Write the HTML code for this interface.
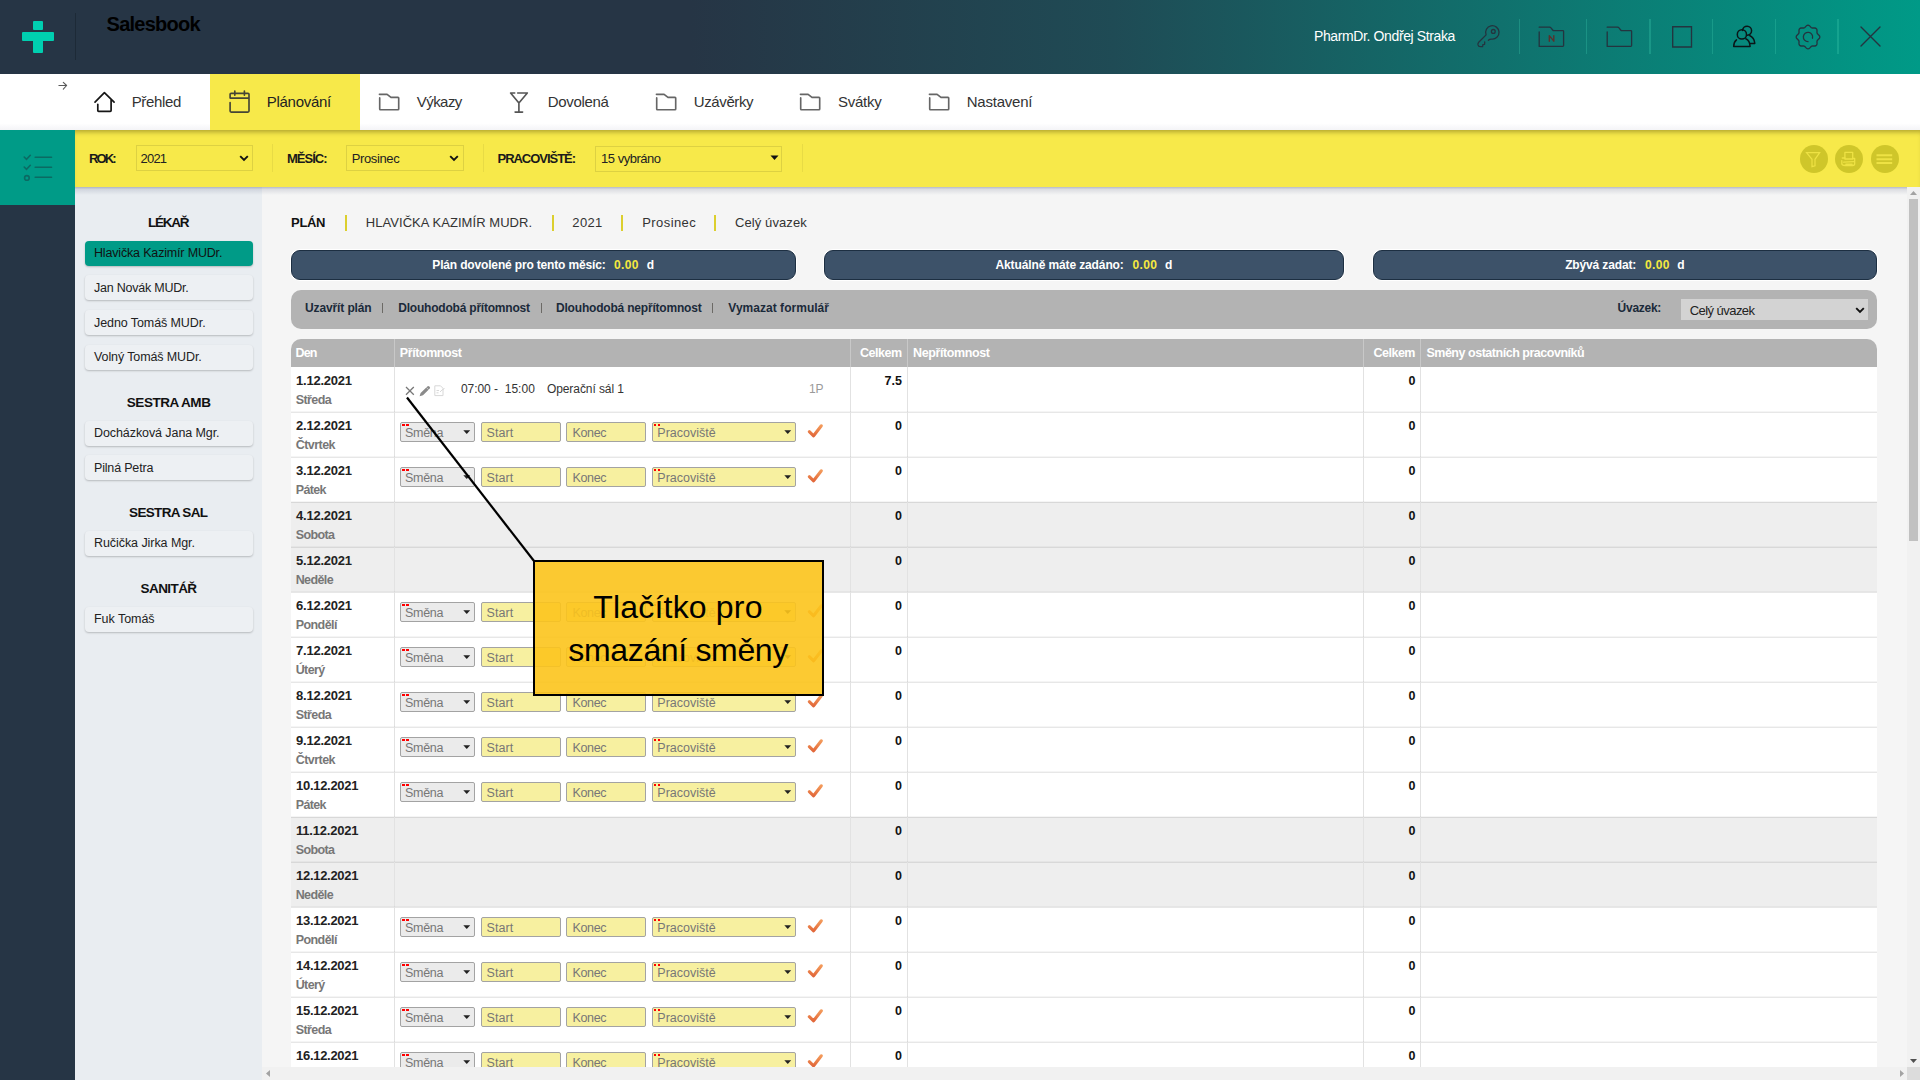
<!DOCTYPE html><html><head><meta charset="utf-8"><style>*{box-sizing:border-box;margin:0;padding:0}
html,body{width:1920px;height:1080px;overflow:hidden}
body{position:relative;background:#f4f4f4;font-family:"Liberation Sans",sans-serif;color:#222}
.a{position:absolute}
.t{white-space:pre}
svg{position:absolute;overflow:visible}
#hdr{left:0;top:0;width:1920px;height:74px;background:linear-gradient(90deg,#263545 0%,#263545 36%,#1f4b55 58%,#009a87 100%)}
#nav{left:0;top:74px;width:1920px;height:56px;background:linear-gradient(#fff 88%,#f4f4f7)}
#tab{left:210px;top:74px;width:150px;height:56px;background:#f7e94a}
#tb{left:75px;top:130px;width:1845px;height:57px;background:#f7e94a;box-shadow:inset 0 5px 5px -3px rgba(60,50,0,.38)}
#tbsh{left:75px;top:187px;width:1845px;height:8px;background:linear-gradient(rgba(40,50,90,.30),rgba(40,50,90,.12) 30%,rgba(0,0,0,0))}
#teal{left:0;top:130px;width:75px;height:75px;background:#009b87}
#dark{left:0;top:205px;width:75px;height:875px;background:#263545}
#panel{left:75px;top:187px;width:187px;height:893px;background:#e9edf1}
#main{left:262px;top:187px;width:1645px;height:880px;background:#f5f5f5}
#vsb{left:1907px;top:187px;width:13px;height:880px;background:#f1f1f1}
#vthumb{left:1909px;top:199px;width:9px;height:342px;background:#c1c1c1}
#hsb{left:262px;top:1067px;width:1645px;height:13px;background:#f1f1f1}
#corner{left:1907px;top:1067px;width:13px;height:13px;background:#dcdcdc}
.sel{border:1px solid rgba(0,0,0,.10);background:transparent}
.card{left:84.8px;width:168.6px;height:25px;border-radius:4px;background:#edf0f3;box-shadow:0 1px 2px rgba(0,0,0,.22)}
.card.act{background:#009b87}
.bbox{top:250px;height:30px;border-radius:9px;background:#3d5269;border:1px solid #1d2f42;box-shadow:0 0 0 1px #fff}
#gbar{left:291px;top:290px;width:1586px;height:39px;border-radius:10px;background:#b3b3b3}
#uvsel{left:1681px;top:299px;width:187px;height:21px;background:#d3d3d3}
#thead{left:291px;top:339px;width:1586px;height:28px;border-radius:10px 10px 0 0;background:#b3b3b3}
.row{left:291px;width:1586px;height:45px;background:#fff}
.hl{left:291px;width:1586px;height:2px;background:linear-gradient(rgba(0,0,0,.04) 50%,rgba(0,0,0,.095) 50%)}
.row.we{background:#eeeeee}
.vl{width:1px;background:#e2e2e2}
.vlh{width:1px;background:#c9c9c9}
.ctl{top:0;height:20px;border:1px solid #a3a3a3;border-radius:2px;box-shadow:inset 0 0 0 0 #fff}
.smena{background:#ebebeb}
.yel{background:#f7f0a0}
.rd{width:2.5px;height:2px;background:#f00}
#callout{left:533px;top:560px;width:291px;height:136px;border:2px solid #000;background:rgba(252,196,28,.90)}
</style></head><body><div id="hdr" class="a"></div>
<div id="nav" class="a"></div>
<div id="tab" class="a"></div>
<div id="tb" class="a"></div>
<div id="teal" class="a"></div>
<div id="dark" class="a"></div>
<div id="panel" class="a"></div>
<div id="main" class="a"></div>
<div class="a" style="left:33px;top:20.5px;width:9.5px;height:9.5px;background:#00cfb0;border-radius:1px"></div>
<div class="a" style="left:22px;top:32px;width:31.7px;height:9px;background:#00cfb0;border-radius:1px"></div>
<div class="a" style="left:33px;top:41px;width:9.5px;height:11.6px;background:#00cfb0;border-radius:0 0 1px 1px"></div>
<div class="a" style="left:75px;top:13px;width:1px;height:47px;background:#1d2a37"></div>
<div class="a t " style="left:106.60px;top:14.00px;font-size:20px;line-height:20px;font-weight:bold;color:#000;letter-spacing:-0.756px;">Salesbook</div>
<div class="a t " style="left:1314.00px;top:29.00px;font-size:14px;line-height:14px;font-weight:normal;color:#fff;letter-spacing:-0.381px;">PharmDr. Ondřej Straka</div>
<div class="a" style="left:1518.8px;top:18.7px;width:1.2px;height:35.7px;background:rgba(60,200,170,.32)"></div>
<div class="a" style="left:1586.3px;top:18.7px;width:1.2px;height:35.7px;background:rgba(60,200,170,.32)"></div>
<div class="a" style="left:1649.4px;top:18.7px;width:1.2px;height:35.7px;background:rgba(60,200,170,.32)"></div>
<div class="a" style="left:1712.2px;top:18.7px;width:1.2px;height:35.7px;background:rgba(60,200,170,.32)"></div>
<div class="a" style="left:1774.7px;top:18.7px;width:1.2px;height:35.7px;background:rgba(60,200,170,.32)"></div>
<div class="a" style="left:1837.4px;top:18.7px;width:1.2px;height:35.7px;background:rgba(60,200,170,.32)"></div>
<svg style="left:1470px;top:18px" width="40" height="37" viewBox="0 0 40 37"><g fill="none" stroke="#24343f" stroke-width="1.3" stroke-linecap="round" stroke-linejoin="round"><path d="M18.4 22.2Q19.6 21 21.6 21.1A6.7 6.7 0 1 0 16.1 16.9L8.7 24.2Q7.7 25.3 8 26.9Q8.4 28.6 10.2 28.6H12.6L12.9 26.7 14.6 26.3 14.7 23.9"/><circle cx="23.3" cy="13.4" r="1.9"/></g></svg>
<svg style="left:1530px;top:18px" width="40" height="37" viewBox="0 0 40 37"><g fill="none" stroke="#24343f" stroke-width="1.3" stroke-linecap="round" stroke-linejoin="round"><path d="M9.2 9.2H19.5Q20.4 9.2 21.2 10.2L22.6 12Q23.2 12.7 24.2 12.7H32.8Q33.6 12.7 33.6 13.5V27.6Q33.6 28.4 32.8 28.4H9.2V14"/><path d="M19.3 23.2V17.6L23.8 23.2V17.6" stroke="#5b302c" stroke-width="1.35"/></g></svg>
<svg style="left:1598px;top:18px" width="40" height="37" viewBox="0 0 40 37"><g fill="none" stroke="#24343f" stroke-width="1.3" stroke-linecap="round" stroke-linejoin="round"><path d="M9.2 9.2H19.5Q20.4 9.2 21.2 10.2L22.6 12Q23.2 12.7 24.2 12.7H32.8Q33.6 12.7 33.6 13.5V27.6Q33.6 28.4 32.8 28.4H9.2V14"/></g></svg>
<svg style="left:1670px;top:24px" width="25" height="26" viewBox="0 0 25 26"><path d="M2.7 2.7H21.5V23H2.7Z" fill="none" stroke="#24343f" stroke-width="1.35"/></svg>
<svg style="left:1725px;top:18px" width="35" height="35" viewBox="0 0 35 35"><g fill="none" stroke="#0b1618" stroke-width="1.5" stroke-linecap="round" stroke-linejoin="round"><path d="M17.6 12.4A4.5 4.5 0 1 1 22.4 17.2"/><path d="M24.6 17.5Q29.3 19.6 29.8 25.4H25.5"/><circle cx="16.9" cy="16.4" r="4.6"/><path d="M11.5 21.9Q8.7 24.1 8.7 28.4H25.1Q24.8 22.6 20.8 20.8"/></g></svg>
<svg style="left:1796px;top:25px" width="24" height="24" viewBox="0 0 24 24"><g fill="none" stroke="#24343f" stroke-width="1.35"><path d="M12.00 0.20 L12.76 0.35 L13.48 0.77 L14.12 1.36 L14.69 1.98 L15.22 2.50 L15.79 2.85 L16.43 3.01 L17.19 3.01 L18.03 2.98 L18.89 3.02 L19.70 3.22 L20.34 3.66 L20.78 4.30 L20.98 5.11 L21.02 5.97 L20.99 6.81 L20.99 7.57 L21.15 8.21 L21.50 8.78 L22.02 9.31 L22.64 9.88 L23.23 10.52 L23.65 11.24 L23.80 12.00 L23.65 12.76 L23.23 13.48 L22.64 14.12 L22.02 14.69 L21.50 15.22 L21.15 15.79 L20.99 16.43 L20.99 17.19 L21.02 18.03 L20.98 18.89 L20.78 19.70 L20.34 20.34 L19.70 20.78 L18.89 20.98 L18.03 21.02 L17.19 20.99 L16.43 20.99 L15.79 21.15 L15.22 21.50 L14.69 22.02 L14.12 22.64 L13.48 23.23 L12.76 23.65 L12.00 23.80 L11.24 23.65 L10.52 23.23 L9.88 22.64 L9.31 22.02 L8.78 21.50 L8.21 21.15 L7.57 20.99 L6.81 20.99 L5.97 21.02 L5.11 20.98 L4.30 20.78 L3.66 20.34 L3.22 19.70 L3.02 18.89 L2.98 18.03 L3.01 17.19 L3.01 16.43 L2.85 15.79 L2.50 15.22 L1.98 14.69 L1.36 14.12 L0.77 13.48 L0.35 12.76 L0.20 12.00 L0.35 11.24 L0.77 10.52 L1.36 9.88 L1.98 9.31 L2.50 8.78 L2.85 8.21 L3.01 7.57 L3.01 6.81 L2.98 5.97 L3.02 5.11 L3.22 4.30 L3.66 3.66 L4.30 3.22 L5.11 3.02 L5.97 2.98 L6.81 3.01 L7.57 3.01 L8.21 2.85 L8.78 2.50 L9.31 1.98 L9.88 1.36 L10.52 0.77 L11.24 0.35Z"/><path d="M12 16.65A4.65 4.65 0 1 1 16.5 13.2" stroke-linecap="round"/></g></svg>
<svg style="left:1859.5px;top:26px" width="21" height="21" viewBox="0 0 21 21"><g stroke="#24343f" stroke-width="1.35" stroke-linecap="round"><path d="M1 1L20 20M20 1L1 20"/></g></svg>
<svg style="left:57px;top:81px" width="13" height="10" viewBox="0 0 13 10"><g fill="none" stroke="#5a5a5a" stroke-width="1.1" stroke-linecap="round" stroke-linejoin="round"><path d="M1.9 4.5H9.6M6.3 1.3L9.6 4.5 6.3 8.2"/></g></svg>
<svg style="left:88px;top:86px" width="32" height="32" viewBox="0 0 32 32"><g fill="none" stroke="#161616" stroke-width="1.7" stroke-linecap="round" stroke-linejoin="round"><path d="M7 16.1L16.4 6.7 26.1 16.1M9.8 18.3V24.5Q9.8 25.3 10.6 25.3H22.3Q23.1 25.3 23.1 24.5V13.9"/></g></svg>
<div class="a t " style="left:131.70px;top:94.00px;font-size:15px;line-height:15px;font-weight:normal;color:#333;letter-spacing:-0.351px;">Přehled</div>
<svg style="left:224px;top:86px" width="32" height="32" viewBox="0 0 32 32"><g fill="none" stroke="#454535" stroke-width="1.65" stroke-linecap="round" stroke-linejoin="round"><path d="M6.1 12.1V8.3Q6.1 7.3 7.1 7.3H24Q25 7.3 25 8.3V25.1Q25 26.1 24 26.1H7.1Q6.1 26.1 6.1 25.1V16.6M6.1 12.1H25M10.8 5V9.2M20.4 5V9.2"/></g></svg>
<div class="a t " style="left:266.70px;top:94.00px;font-size:15px;line-height:15px;font-weight:normal;color:#222;letter-spacing:-0.265px;">Plánování</div>
<svg style="left:372.0px;top:86px" width="32" height="32" viewBox="0 0 32 32"><g fill="none" stroke="#666" stroke-width="1.65" stroke-linecap="round" stroke-linejoin="round"><path d="M7.4 8.3H15.1L19 11.4H26Q26.7 11.4 26.7 12.1V23Q26.7 23.7 26 23.7H8.4Q7.7 23.7 7.7 23V11.9"/></g></svg>
<div class="a t " style="left:416.70px;top:94.00px;font-size:15px;line-height:15px;font-weight:normal;color:#333;letter-spacing:-0.532px;">Výkazy</div>
<svg style="left:503px;top:86px" width="32" height="32" viewBox="0 0 32 32"><g fill="none" stroke="#555" stroke-width="1.65" stroke-linecap="round" stroke-linejoin="round"><path d="M11.7 7H7.6L15.9 17 24.3 7H14.7M15.9 17V26.1M12.1 26.1H19.6"/></g></svg>
<div class="a t " style="left:547.70px;top:94.00px;font-size:15px;line-height:15px;font-weight:normal;color:#333;letter-spacing:-0.327px;">Dovolená</div>
<svg style="left:649.4px;top:86px" width="32" height="32" viewBox="0 0 32 32"><g fill="none" stroke="#666" stroke-width="1.65" stroke-linecap="round" stroke-linejoin="round"><path d="M7.4 8.3H15.1L19 11.4H26Q26.7 11.4 26.7 12.1V23Q26.7 23.7 26 23.7H8.4Q7.7 23.7 7.7 23V11.9"/></g></svg>
<div class="a t " style="left:693.80px;top:94.00px;font-size:15px;line-height:15px;font-weight:normal;color:#333;letter-spacing:-0.388px;">Uzávěrky</div>
<svg style="left:793.4px;top:86px" width="32" height="32" viewBox="0 0 32 32"><g fill="none" stroke="#666" stroke-width="1.65" stroke-linecap="round" stroke-linejoin="round"><path d="M7.4 8.3H15.1L19 11.4H26Q26.7 11.4 26.7 12.1V23Q26.7 23.7 26 23.7H8.4Q7.7 23.7 7.7 23V11.9"/></g></svg>
<div class="a t " style="left:838.00px;top:94.00px;font-size:15px;line-height:15px;font-weight:normal;color:#333;letter-spacing:-0.263px;">Svátky</div>
<svg style="left:921.6px;top:86px" width="32" height="32" viewBox="0 0 32 32"><g fill="none" stroke="#666" stroke-width="1.65" stroke-linecap="round" stroke-linejoin="round"><path d="M7.4 8.3H15.1L19 11.4H26Q26.7 11.4 26.7 12.1V23Q26.7 23.7 26 23.7H8.4Q7.7 23.7 7.7 23V11.9"/></g></svg>
<div class="a t " style="left:966.70px;top:94.00px;font-size:15px;line-height:15px;font-weight:normal;color:#333;letter-spacing:-0.218px;">Nastavení</div>
<div id="tbsh" class="a"></div>
<div class="a t " style="left:89.00px;top:152.00px;font-size:13px;line-height:13px;font-weight:bold;color:#1a1a1a;letter-spacing:-1.840px;">ROK:</div>
<div class="a sel" style="left:136px;top:145px;width:117px;height:25.5px"></div>
<div class="a t " style="left:140.60px;top:152.00px;font-size:13px;line-height:13px;font-weight:normal;color:#222;letter-spacing:-0.807px;">2021</div>
<svg style="left:239.0px;top:154.5px" width="10" height="7" viewBox="0 0 10 7"><path d="M1.2 1.2L5 5 8.8 1.2" fill="none" stroke="#111" stroke-width="1.9"/></svg>
<div class="a" style="left:272px;top:144px;width:1px;height:27.5px;background:rgba(0,0,0,.06)"></div>
<div class="a t " style="left:287.00px;top:152.00px;font-size:13px;line-height:13px;font-weight:bold;color:#1a1a1a;letter-spacing:-1.000px;">MĚSÍC:</div>
<div class="a sel" style="left:346px;top:145px;width:117.5px;height:25.5px"></div>
<div class="a t " style="left:351.70px;top:152.00px;font-size:13px;line-height:13px;font-weight:normal;color:#222;letter-spacing:-0.368px;">Prosinec</div>
<svg style="left:449.0px;top:154.5px" width="10" height="7" viewBox="0 0 10 7"><path d="M1.2 1.2L5 5 8.8 1.2" fill="none" stroke="#111" stroke-width="1.9"/></svg>
<div class="a" style="left:483px;top:144px;width:1px;height:27.5px;background:rgba(0,0,0,.06)"></div>
<div class="a t " style="left:497.50px;top:152.00px;font-size:13px;line-height:13px;font-weight:bold;color:#1a1a1a;letter-spacing:-1.034px;">PRACOVIŠTĚ:</div>
<div class="a sel" style="left:595px;top:145.5px;width:187px;height:26px"></div>
<div class="a t " style="left:601.00px;top:152.00px;font-size:13px;line-height:13px;font-weight:normal;color:#222;letter-spacing:-0.481px;">15 vybráno</div>
<svg style="left:770px;top:154.5px" width="9" height="6" viewBox="0 0 9 6"><path d="M0.5 0.5H8.5L4.5 5Z" fill="#111"/></svg>
<div class="a" style="left:802px;top:144px;width:1px;height:27.5px;background:rgba(0,0,0,.06)"></div>
<div class="a" style="left:1799.6px;top:145px;width:28px;height:28px;border-radius:50%;background:#cfc62a"></div>
<div class="a" style="left:1834.6px;top:145px;width:28px;height:28px;border-radius:50%;background:#cfc62a"></div>
<div class="a" style="left:1871.0px;top:145px;width:28px;height:28px;border-radius:50%;background:#cfc62a"></div>
<svg style="left:1803px;top:150px" width="22" height="18" viewBox="0 0 22 18"><path d="M7 3.2H20.2L15.5 9.8V16.4L12.5 17.2V9.8Z" fill="none" stroke="#eee244" stroke-width="1.2" transform="translate(-3.5 -0.5)"/></svg>
<svg style="left:1834px;top:145px" width="30" height="28" viewBox="0 0 30 28"><g fill="none" stroke="#eee244" stroke-width="1.3" stroke-linecap="round" stroke-linejoin="round"><path d="M10.9 7.3H18.7V14H10.9Z"/><path d="M10.9 13H8.3M7.8 15.6V18.4Q7.8 20.5 11.1 20.5H18.7Q20.7 20.5 20.7 18.5V13.5H18.7M9.6 17.1L19.7 16.6M11.9 19.2H18.1"/></g></svg>
<svg style="left:1875px;top:150px" width="22" height="18" viewBox="0 0 22 18"><g stroke="#eee244" stroke-width="2"><path d="M1.5 5.2H17.2M1.5 9.2H17.2M1.5 13H17.2"/></g></svg>
<svg style="left:22px;top:153px" width="32" height="30" viewBox="0 0 32 30"><g fill="none" stroke="#0b6b63" stroke-width="1.6" stroke-linecap="round"><path d="M2.2 4L4.5 6.4 8.3 2.3M2.2 14L4.5 16.4 8.3 12.3"/><circle cx="4.9" cy="24.9" r="2.3"/><path d="M13.2 4.3H29.5M13.2 14.3H29.5M13.2 24.3H29.5"/></g></svg>
<div class="a t " style="left:148.10px;top:216.00px;font-size:13.5px;line-height:13.5px;font-weight:bold;color:#111;letter-spacing:-1.300px;">LÉKAŘ</div>
<div class="a t " style="left:126.80px;top:396.00px;font-size:13.5px;line-height:13.5px;font-weight:bold;color:#111;letter-spacing:-0.463px;">SESTRA AMB</div>
<div class="a t " style="left:129.10px;top:506.00px;font-size:13.5px;line-height:13.5px;font-weight:bold;color:#111;letter-spacing:-0.680px;">SESTRA SAL</div>
<div class="a t " style="left:140.60px;top:582.00px;font-size:13.5px;line-height:13.5px;font-weight:bold;color:#111;letter-spacing:-0.583px;">SANITÁŘ</div>
<div class="a card act" style="top:241.0px"></div>
<div class="a t " style="left:94.00px;top:247.00px;font-size:12.5px;line-height:12.5px;font-weight:normal;color:#111;letter-spacing:-0.170px;">Hlavička Kazimír MUDr.</div>
<div class="a card" style="top:275.0px"></div>
<div class="a t " style="left:94.00px;top:282.00px;font-size:12.5px;line-height:12.5px;font-weight:normal;color:#222;letter-spacing:-0.232px;">Jan Novák MUDr.</div>
<div class="a card" style="top:309.5px"></div>
<div class="a t " style="left:94.00px;top:317.00px;font-size:12.5px;line-height:12.5px;font-weight:normal;color:#222;letter-spacing:-0.088px;">Jedno Tomáš MUDr.</div>
<div class="a card" style="top:344.5px"></div>
<div class="a t " style="left:94.00px;top:351.00px;font-size:12.5px;line-height:12.5px;font-weight:normal;color:#222;letter-spacing:-0.108px;">Volný Tomáš MUDr.</div>
<div class="a card" style="top:421.0px"></div>
<div class="a t " style="left:94.00px;top:427.00px;font-size:12.5px;line-height:12.5px;font-weight:normal;color:#222;letter-spacing:-0.082px;">Docházková Jana Mgr.</div>
<div class="a card" style="top:455.2px"></div>
<div class="a t " style="left:94.00px;top:462.00px;font-size:12.5px;line-height:12.5px;font-weight:normal;color:#222;letter-spacing:-0.176px;">Pilná Petra</div>
<div class="a card" style="top:531.0px"></div>
<div class="a t " style="left:94.00px;top:537.00px;font-size:12.5px;line-height:12.5px;font-weight:normal;color:#222;letter-spacing:-0.065px;">Ručička Jirka Mgr.</div>
<div class="a card" style="top:606.5px"></div>
<div class="a t " style="left:94.00px;top:613.00px;font-size:12.5px;line-height:12.5px;font-weight:normal;color:#222;letter-spacing:-0.038px;">Fuk Tomáš</div>
<div class="a t " style="left:291.10px;top:216.00px;font-size:13px;line-height:13px;font-weight:bold;color:#111;letter-spacing:-0.364px;">PLÁN</div>
<div class="a" style="left:344.7px;top:214.5px;width:2px;height:16px;background:#dccf2e"></div>
<div class="a" style="left:551.7px;top:214.5px;width:2px;height:16px;background:#dccf2e"></div>
<div class="a" style="left:621.3px;top:214.5px;width:2px;height:16px;background:#dccf2e"></div>
<div class="a" style="left:714.3px;top:214.5px;width:2px;height:16px;background:#dccf2e"></div>
<div class="a t " style="left:365.80px;top:216.00px;font-size:13px;line-height:13px;font-weight:normal;color:#333;letter-spacing:0.053px;">HLAVIČKA KAZIMÍR MUDR.</div>
<div class="a t " style="left:572.30px;top:216.00px;font-size:13px;line-height:13px;font-weight:normal;color:#333;letter-spacing:0.359px;">2021</div>
<div class="a t " style="left:642.30px;top:216.00px;font-size:13px;line-height:13px;font-weight:normal;color:#333;letter-spacing:0.403px;">Prosinec</div>
<div class="a t " style="left:735.00px;top:216.00px;font-size:13px;line-height:13px;font-weight:normal;color:#333;letter-spacing:0.089px;">Celý úvazek</div>
<div class="a bbox" style="left:291.0px;width:505.0px"></div>
<div class="a bbox" style="left:823.5px;width:520.5px"></div>
<div class="a bbox" style="left:1372.5px;width:504.5px"></div>
<div class="a t " style="left:432.30px;top:259.00px;font-size:12px;line-height:12px;font-weight:bold;color:#fff;letter-spacing:-0.160px;">Plán dovolené pro tento měsíc:</div>
<div class="a t " style="left:614.00px;top:259.00px;font-size:12px;line-height:12px;font-weight:bold;color:#f5e93f;letter-spacing:0.380px;">0.00</div>
<div class="a t " style="left:646.70px;top:259.00px;font-size:12px;line-height:12px;font-weight:bold;color:#fff;letter-spacing:0.000px;">d</div>
<div class="a t " style="left:995.50px;top:259.00px;font-size:12px;line-height:12px;font-weight:bold;color:#fff;letter-spacing:-0.120px;">Aktuálně máte zadáno:</div>
<div class="a t " style="left:1132.40px;top:259.00px;font-size:12px;line-height:12px;font-weight:bold;color:#f5e93f;letter-spacing:0.380px;">0.00</div>
<div class="a t " style="left:1165.00px;top:259.00px;font-size:12px;line-height:12px;font-weight:bold;color:#fff;letter-spacing:0.000px;">d</div>
<div class="a t " style="left:1565.20px;top:259.00px;font-size:12px;line-height:12px;font-weight:bold;color:#fff;letter-spacing:-0.144px;">Zbývá zadat:</div>
<div class="a t " style="left:1645.00px;top:259.00px;font-size:12px;line-height:12px;font-weight:bold;color:#f5e93f;letter-spacing:0.380px;">0.00</div>
<div class="a t " style="left:1677.30px;top:259.00px;font-size:12px;line-height:12px;font-weight:bold;color:#fff;letter-spacing:0.000px;">d</div>
<div id="gbar" class="a"></div>
<div class="a t " style="left:305.00px;top:302.00px;font-size:12px;line-height:12px;font-weight:bold;color:#1b2a3a;letter-spacing:-0.120px;">Uzavřít plán</div>
<div class="a t " style="left:398.30px;top:302.00px;font-size:12px;line-height:12px;font-weight:bold;color:#1b2a3a;letter-spacing:-0.214px;">Dlouhodobá přítomnost</div>
<div class="a t " style="left:556.00px;top:302.00px;font-size:12px;line-height:12px;font-weight:bold;color:#1b2a3a;letter-spacing:-0.195px;">Dlouhodobá nepřítomnost</div>
<div class="a t " style="left:728.30px;top:302.00px;font-size:12px;line-height:12px;font-weight:bold;color:#1b2a3a;letter-spacing:0.029px;">Vymazat formulář</div>
<div class="a" style="left:382.2px;top:303px;width:1px;height:9.5px;background:#6c6a66"></div>
<div class="a" style="left:540.6px;top:303px;width:1px;height:9.5px;background:#6c6a66"></div>
<div class="a" style="left:712.3px;top:303px;width:1px;height:9.5px;background:#6c6a66"></div>
<div class="a t " style="left:1617.60px;top:302.00px;font-size:12px;line-height:12px;font-weight:bold;color:#1b2a3a;letter-spacing:-0.277px;">Úvazek:</div>
<div id="uvsel" class="a"></div>
<div class="a t " style="left:1689.80px;top:304.00px;font-size:13px;line-height:13px;font-weight:normal;color:#222;letter-spacing:-0.561px;">Celý úvazek</div>
<svg style="left:1854.5px;top:307.0px" width="10" height="7" viewBox="0 0 10 7"><path d="M1.2 1.2L5 5 8.8 1.2" fill="none" stroke="#111" stroke-width="1.9"/></svg>
<div id="thead" class="a"></div>
<div class="a vlh" style="left:394px;top:339px;height:28px;background:#c8c8c8"></div>
<div class="a vlh" style="left:850px;top:339px;height:28px;background:#c8c8c8"></div>
<div class="a vlh" style="left:907px;top:339px;height:28px;background:#c8c8c8"></div>
<div class="a vlh" style="left:1363px;top:339px;height:28px;background:#c8c8c8"></div>
<div class="a vlh" style="left:1420px;top:339px;height:28px;background:#c8c8c8"></div>
<div class="a t " style="left:295.60px;top:347.00px;font-size:12.5px;line-height:12.5px;font-weight:bold;color:#fff;letter-spacing:-0.912px;">Den</div>
<div class="a t " style="left:399.80px;top:347.00px;font-size:12.5px;line-height:12.5px;font-weight:bold;color:#fff;letter-spacing:-0.420px;">Přítomnost</div>
<div class="a t " style="left:860.10px;top:347.00px;font-size:12.5px;line-height:12.5px;font-weight:bold;color:#fff;letter-spacing:-0.497px;">Celkem</div>
<div class="a t " style="left:913.00px;top:347.00px;font-size:12.5px;line-height:12.5px;font-weight:bold;color:#fff;letter-spacing:-0.386px;">Nepřítomnost</div>
<div class="a t " style="left:1373.50px;top:347.00px;font-size:12.5px;line-height:12.5px;font-weight:bold;color:#fff;letter-spacing:-0.497px;">Celkem</div>
<div class="a t " style="left:1426.40px;top:347.00px;font-size:12.5px;line-height:12.5px;font-weight:bold;color:#fff;letter-spacing:-0.475px;">Směny ostatních pracovníků</div>
<div class="a row" style="top:367px;height:45px"></div>
<div class="a row" style="top:412px;height:45px"></div>
<div class="a row" style="top:457px;height:45px"></div>
<div class="a row we" style="top:502px;height:45px"></div>
<div class="a row we" style="top:547px;height:45px"></div>
<div class="a row" style="top:592px;height:45px"></div>
<div class="a row" style="top:637px;height:45px"></div>
<div class="a row" style="top:682px;height:45px"></div>
<div class="a row" style="top:727px;height:45px"></div>
<div class="a row" style="top:772px;height:45px"></div>
<div class="a row we" style="top:817px;height:45px"></div>
<div class="a row we" style="top:862px;height:45px"></div>
<div class="a row" style="top:907px;height:45px"></div>
<div class="a row" style="top:952px;height:45px"></div>
<div class="a row" style="top:997px;height:45px"></div>
<div class="a row" style="top:1042px;height:25px"></div>
<div class="a t " style="left:296.00px;top:374.00px;font-size:13px;line-height:13px;font-weight:bold;color:#222;letter-spacing:-0.230px;">1.12.2021</div>
<div class="a t " style="left:295.70px;top:394.00px;font-size:12.5px;line-height:12.5px;font-weight:bold;color:#777;letter-spacing:-0.584px;">Středa</div>
<div class="a t " style="left:884.61px;top:375.00px;font-size:12.5px;line-height:12.5px;font-weight:bold;color:#111;letter-spacing:0.000px;">7.5</div>
<div class="a t " style="left:1408.55px;top:375.00px;font-size:12.5px;line-height:12.5px;font-weight:bold;color:#111;letter-spacing:0.000px;">0</div>
<svg style="left:405px;top:386px" width="10" height="10" viewBox="0 0 10 10"><path d="M1 1L8.8 8.8M8.8 1L1 8.8" stroke="#777" stroke-width="1.3"/></svg>
<svg style="left:419px;top:385px" width="12" height="12" viewBox="0 0 12 12"><path d="M8.3 1.4Q9.3 0.4 10.3 1.4L10.6 1.7Q11.6 2.7 10.6 3.7L4 10.3 0.6 11.3 1.6 7.9Z" fill="#8a8a8a"/><path d="M7.3 2.4L9.6 4.7" stroke="#fff" stroke-width=".5"/></svg>
<svg style="left:434px;top:385px" width="12" height="12" viewBox="0 0 12 12"><g fill="none" stroke="#d8d8d8" stroke-width="1"><path d="M0.8 0.8H6.5L9 3.3V10.6H0.8Z"/><path d="M2.5 5.5H5M2.5 7.8H4.5M6 7L8 5 10.5 3.5"/></g></svg>
<div class="a t " style="left:461.00px;top:383.00px;font-size:12px;line-height:12px;font-weight:normal;color:#333;letter-spacing:-0.077px;">07:00 -</div>
<div class="a t " style="left:504.70px;top:383.00px;font-size:12px;line-height:12px;font-weight:normal;color:#333;letter-spacing:0.042px;">15:00</div>
<div class="a t " style="left:546.90px;top:383.00px;font-size:12px;line-height:12px;font-weight:normal;color:#333;letter-spacing:-0.073px;">Operační sál 1</div>
<div class="a t " style="left:809.00px;top:383.00px;font-size:12px;line-height:12px;font-weight:normal;color:#9a9a9a;letter-spacing:-0.287px;">1P</div>
<div class="a vl" style="left:394px;top:367px;height:45px"></div>
<div class="a vl" style="left:850px;top:367px;height:45px"></div>
<div class="a vl" style="left:907px;top:367px;height:45px"></div>
<div class="a vl" style="left:1363px;top:367px;height:45px"></div>
<div class="a vl" style="left:1420px;top:367px;height:45px"></div>
<div class="a hl" style="top:411px"></div>
<div class="a t " style="left:296.00px;top:419.00px;font-size:13px;line-height:13px;font-weight:bold;color:#222;letter-spacing:-0.230px;">2.12.2021</div>
<div class="a t " style="left:295.70px;top:439.00px;font-size:12.5px;line-height:12.5px;font-weight:bold;color:#777;letter-spacing:-0.538px;">Čtvrtek</div>
<div class="a t " style="left:895.05px;top:420.00px;font-size:12.5px;line-height:12.5px;font-weight:bold;color:#111;letter-spacing:0.000px;">0</div>
<div class="a t " style="left:1408.55px;top:420.00px;font-size:12.5px;line-height:12.5px;font-weight:bold;color:#111;letter-spacing:0.000px;">0</div>
<div class="a ctl smena" style="left:400px;top:422px;width:75px"></div>
<div class="a rd" style="left:402px;top:424px"></div><div class="a rd" style="left:406px;top:424px"></div>
<div class="a t " style="left:405.00px;top:427.00px;font-size:12.5px;line-height:12.5px;font-weight:normal;color:#777;letter-spacing:-0.302px;">Směna</div>
<svg style="left:463px;top:430.4px" width="8" height="5" viewBox="0 0 8 5"><path d="M0.3 0.3H7.2L3.75 4Z" fill="#222"/></svg>
<div class="a ctl yel" style="left:481px;top:422px;width:79.5px"></div>
<div class="a t " style="left:486.50px;top:427.00px;font-size:12.5px;line-height:12.5px;font-weight:normal;color:#777;letter-spacing:0.073px;">Start</div>
<div class="a ctl yel" style="left:566px;top:422px;width:80px"></div>
<div class="a t " style="left:572.40px;top:427.00px;font-size:12.5px;line-height:12.5px;font-weight:normal;color:#777;letter-spacing:-0.313px;">Konec</div>
<div class="a ctl yel" style="left:652px;top:422px;width:143.5px"></div>
<div class="a rd" style="left:653.5px;top:424px"></div><div class="a rd" style="left:657.8px;top:424px"></div>
<div class="a t " style="left:657.30px;top:427.00px;font-size:12.5px;line-height:12.5px;font-weight:normal;color:#777;letter-spacing:-0.007px;">Pracoviště</div>
<svg style="left:784.3px;top:430.4px" width="8" height="5" viewBox="0 0 8 5"><path d="M0.3 0.3H7.2L3.75 4Z" fill="#222"/></svg>
<svg style="left:807px;top:424px" width="17" height="15" viewBox="0 0 17 15"><defs><linearGradient id="cg2" x1="0" y1="0" x2="0" y2="1"><stop offset="0" stop-color="#f39a5a"/><stop offset="1" stop-color="#e2683a"/></linearGradient></defs><path d="M2.3 7.7L6.6 11.8 14.3 1.8" fill="none" stroke="url(#cg2)" stroke-width="3.1" stroke-linecap="round" stroke-linejoin="round"/></svg>
<div class="a vl" style="left:394px;top:412px;height:45px"></div>
<div class="a vl" style="left:850px;top:412px;height:45px"></div>
<div class="a vl" style="left:907px;top:412px;height:45px"></div>
<div class="a vl" style="left:1363px;top:412px;height:45px"></div>
<div class="a vl" style="left:1420px;top:412px;height:45px"></div>
<div class="a hl" style="top:456px"></div>
<div class="a t " style="left:296.00px;top:464.00px;font-size:13px;line-height:13px;font-weight:bold;color:#222;letter-spacing:-0.230px;">3.12.2021</div>
<div class="a t " style="left:295.70px;top:484.00px;font-size:12.5px;line-height:12.5px;font-weight:bold;color:#777;letter-spacing:-0.625px;">Pátek</div>
<div class="a t " style="left:895.05px;top:465.00px;font-size:12.5px;line-height:12.5px;font-weight:bold;color:#111;letter-spacing:0.000px;">0</div>
<div class="a t " style="left:1408.55px;top:465.00px;font-size:12.5px;line-height:12.5px;font-weight:bold;color:#111;letter-spacing:0.000px;">0</div>
<div class="a ctl smena" style="left:400px;top:467px;width:75px"></div>
<div class="a rd" style="left:402px;top:469px"></div><div class="a rd" style="left:406px;top:469px"></div>
<div class="a t " style="left:405.00px;top:472.00px;font-size:12.5px;line-height:12.5px;font-weight:normal;color:#777;letter-spacing:-0.302px;">Směna</div>
<svg style="left:463px;top:475.4px" width="8" height="5" viewBox="0 0 8 5"><path d="M0.3 0.3H7.2L3.75 4Z" fill="#222"/></svg>
<div class="a ctl yel" style="left:481px;top:467px;width:79.5px"></div>
<div class="a t " style="left:486.50px;top:472.00px;font-size:12.5px;line-height:12.5px;font-weight:normal;color:#777;letter-spacing:0.073px;">Start</div>
<div class="a ctl yel" style="left:566px;top:467px;width:80px"></div>
<div class="a t " style="left:572.40px;top:472.00px;font-size:12.5px;line-height:12.5px;font-weight:normal;color:#777;letter-spacing:-0.313px;">Konec</div>
<div class="a ctl yel" style="left:652px;top:467px;width:143.5px"></div>
<div class="a rd" style="left:653.5px;top:469px"></div><div class="a rd" style="left:657.8px;top:469px"></div>
<div class="a t " style="left:657.30px;top:472.00px;font-size:12.5px;line-height:12.5px;font-weight:normal;color:#777;letter-spacing:-0.007px;">Pracoviště</div>
<svg style="left:784.3px;top:475.4px" width="8" height="5" viewBox="0 0 8 5"><path d="M0.3 0.3H7.2L3.75 4Z" fill="#222"/></svg>
<svg style="left:807px;top:469px" width="17" height="15" viewBox="0 0 17 15"><defs><linearGradient id="cg3" x1="0" y1="0" x2="0" y2="1"><stop offset="0" stop-color="#f39a5a"/><stop offset="1" stop-color="#e2683a"/></linearGradient></defs><path d="M2.3 7.7L6.6 11.8 14.3 1.8" fill="none" stroke="url(#cg3)" stroke-width="3.1" stroke-linecap="round" stroke-linejoin="round"/></svg>
<div class="a vl" style="left:394px;top:457px;height:45px"></div>
<div class="a vl" style="left:850px;top:457px;height:45px"></div>
<div class="a vl" style="left:907px;top:457px;height:45px"></div>
<div class="a vl" style="left:1363px;top:457px;height:45px"></div>
<div class="a vl" style="left:1420px;top:457px;height:45px"></div>
<div class="a hl" style="top:501px"></div>
<div class="a t " style="left:296.00px;top:509.00px;font-size:13px;line-height:13px;font-weight:bold;color:#222;letter-spacing:-0.230px;">4.12.2021</div>
<div class="a t " style="left:295.70px;top:529.00px;font-size:12.5px;line-height:12.5px;font-weight:bold;color:#777;letter-spacing:-0.635px;">Sobota</div>
<div class="a t " style="left:895.05px;top:510.00px;font-size:12.5px;line-height:12.5px;font-weight:bold;color:#111;letter-spacing:0.000px;">0</div>
<div class="a t " style="left:1408.55px;top:510.00px;font-size:12.5px;line-height:12.5px;font-weight:bold;color:#111;letter-spacing:0.000px;">0</div>
<div class="a vl" style="left:394px;top:502px;height:45px"></div>
<div class="a vl" style="left:850px;top:502px;height:45px"></div>
<div class="a vl" style="left:907px;top:502px;height:45px"></div>
<div class="a vl" style="left:1363px;top:502px;height:45px"></div>
<div class="a vl" style="left:1420px;top:502px;height:45px"></div>
<div class="a hl" style="top:546px"></div>
<div class="a t " style="left:296.00px;top:554.00px;font-size:13px;line-height:13px;font-weight:bold;color:#222;letter-spacing:-0.230px;">5.12.2021</div>
<div class="a t " style="left:295.70px;top:574.00px;font-size:12.5px;line-height:12.5px;font-weight:bold;color:#777;letter-spacing:-0.615px;">Neděle</div>
<div class="a t " style="left:895.05px;top:555.00px;font-size:12.5px;line-height:12.5px;font-weight:bold;color:#111;letter-spacing:0.000px;">0</div>
<div class="a t " style="left:1408.55px;top:555.00px;font-size:12.5px;line-height:12.5px;font-weight:bold;color:#111;letter-spacing:0.000px;">0</div>
<div class="a vl" style="left:394px;top:547px;height:45px"></div>
<div class="a vl" style="left:850px;top:547px;height:45px"></div>
<div class="a vl" style="left:907px;top:547px;height:45px"></div>
<div class="a vl" style="left:1363px;top:547px;height:45px"></div>
<div class="a vl" style="left:1420px;top:547px;height:45px"></div>
<div class="a hl" style="top:591px"></div>
<div class="a t " style="left:296.00px;top:599.00px;font-size:13px;line-height:13px;font-weight:bold;color:#222;letter-spacing:-0.230px;">6.12.2021</div>
<div class="a t " style="left:295.70px;top:619.00px;font-size:12.5px;line-height:12.5px;font-weight:bold;color:#777;letter-spacing:-0.564px;">Pondělí</div>
<div class="a t " style="left:895.05px;top:600.00px;font-size:12.5px;line-height:12.5px;font-weight:bold;color:#111;letter-spacing:0.000px;">0</div>
<div class="a t " style="left:1408.55px;top:600.00px;font-size:12.5px;line-height:12.5px;font-weight:bold;color:#111;letter-spacing:0.000px;">0</div>
<div class="a ctl smena" style="left:400px;top:602px;width:75px"></div>
<div class="a rd" style="left:402px;top:604px"></div><div class="a rd" style="left:406px;top:604px"></div>
<div class="a t " style="left:405.00px;top:607.00px;font-size:12.5px;line-height:12.5px;font-weight:normal;color:#777;letter-spacing:-0.302px;">Směna</div>
<svg style="left:463px;top:610.4px" width="8" height="5" viewBox="0 0 8 5"><path d="M0.3 0.3H7.2L3.75 4Z" fill="#222"/></svg>
<div class="a ctl yel" style="left:481px;top:602px;width:79.5px"></div>
<div class="a t " style="left:486.50px;top:607.00px;font-size:12.5px;line-height:12.5px;font-weight:normal;color:#777;letter-spacing:0.073px;">Start</div>
<div class="a ctl yel" style="left:566px;top:602px;width:80px"></div>
<div class="a t " style="left:572.40px;top:607.00px;font-size:12.5px;line-height:12.5px;font-weight:normal;color:#777;letter-spacing:-0.313px;">Konec</div>
<div class="a ctl yel" style="left:652px;top:602px;width:143.5px"></div>
<div class="a rd" style="left:653.5px;top:604px"></div><div class="a rd" style="left:657.8px;top:604px"></div>
<div class="a t " style="left:657.30px;top:607.00px;font-size:12.5px;line-height:12.5px;font-weight:normal;color:#777;letter-spacing:-0.007px;">Pracoviště</div>
<svg style="left:784.3px;top:610.4px" width="8" height="5" viewBox="0 0 8 5"><path d="M0.3 0.3H7.2L3.75 4Z" fill="#222"/></svg>
<svg style="left:807px;top:604px" width="17" height="15" viewBox="0 0 17 15"><defs><linearGradient id="cg6" x1="0" y1="0" x2="0" y2="1"><stop offset="0" stop-color="#f39a5a"/><stop offset="1" stop-color="#e2683a"/></linearGradient></defs><path d="M2.3 7.7L6.6 11.8 14.3 1.8" fill="none" stroke="url(#cg6)" stroke-width="3.1" stroke-linecap="round" stroke-linejoin="round"/></svg>
<div class="a vl" style="left:394px;top:592px;height:45px"></div>
<div class="a vl" style="left:850px;top:592px;height:45px"></div>
<div class="a vl" style="left:907px;top:592px;height:45px"></div>
<div class="a vl" style="left:1363px;top:592px;height:45px"></div>
<div class="a vl" style="left:1420px;top:592px;height:45px"></div>
<div class="a hl" style="top:636px"></div>
<div class="a t " style="left:296.00px;top:644.00px;font-size:13px;line-height:13px;font-weight:bold;color:#222;letter-spacing:-0.230px;">7.12.2021</div>
<div class="a t " style="left:295.70px;top:664.00px;font-size:12.5px;line-height:12.5px;font-weight:bold;color:#777;letter-spacing:-0.599px;">Úterý</div>
<div class="a t " style="left:895.05px;top:645.00px;font-size:12.5px;line-height:12.5px;font-weight:bold;color:#111;letter-spacing:0.000px;">0</div>
<div class="a t " style="left:1408.55px;top:645.00px;font-size:12.5px;line-height:12.5px;font-weight:bold;color:#111;letter-spacing:0.000px;">0</div>
<div class="a ctl smena" style="left:400px;top:647px;width:75px"></div>
<div class="a rd" style="left:402px;top:649px"></div><div class="a rd" style="left:406px;top:649px"></div>
<div class="a t " style="left:405.00px;top:652.00px;font-size:12.5px;line-height:12.5px;font-weight:normal;color:#777;letter-spacing:-0.302px;">Směna</div>
<svg style="left:463px;top:655.4px" width="8" height="5" viewBox="0 0 8 5"><path d="M0.3 0.3H7.2L3.75 4Z" fill="#222"/></svg>
<div class="a ctl yel" style="left:481px;top:647px;width:79.5px"></div>
<div class="a t " style="left:486.50px;top:652.00px;font-size:12.5px;line-height:12.5px;font-weight:normal;color:#777;letter-spacing:0.073px;">Start</div>
<div class="a ctl yel" style="left:566px;top:647px;width:80px"></div>
<div class="a t " style="left:572.40px;top:652.00px;font-size:12.5px;line-height:12.5px;font-weight:normal;color:#777;letter-spacing:-0.313px;">Konec</div>
<div class="a ctl yel" style="left:652px;top:647px;width:143.5px"></div>
<div class="a rd" style="left:653.5px;top:649px"></div><div class="a rd" style="left:657.8px;top:649px"></div>
<div class="a t " style="left:657.30px;top:652.00px;font-size:12.5px;line-height:12.5px;font-weight:normal;color:#777;letter-spacing:-0.007px;">Pracoviště</div>
<svg style="left:784.3px;top:655.4px" width="8" height="5" viewBox="0 0 8 5"><path d="M0.3 0.3H7.2L3.75 4Z" fill="#222"/></svg>
<svg style="left:807px;top:649px" width="17" height="15" viewBox="0 0 17 15"><defs><linearGradient id="cg7" x1="0" y1="0" x2="0" y2="1"><stop offset="0" stop-color="#f39a5a"/><stop offset="1" stop-color="#e2683a"/></linearGradient></defs><path d="M2.3 7.7L6.6 11.8 14.3 1.8" fill="none" stroke="url(#cg7)" stroke-width="3.1" stroke-linecap="round" stroke-linejoin="round"/></svg>
<div class="a vl" style="left:394px;top:637px;height:45px"></div>
<div class="a vl" style="left:850px;top:637px;height:45px"></div>
<div class="a vl" style="left:907px;top:637px;height:45px"></div>
<div class="a vl" style="left:1363px;top:637px;height:45px"></div>
<div class="a vl" style="left:1420px;top:637px;height:45px"></div>
<div class="a hl" style="top:681px"></div>
<div class="a t " style="left:296.00px;top:689.00px;font-size:13px;line-height:13px;font-weight:bold;color:#222;letter-spacing:-0.230px;">8.12.2021</div>
<div class="a t " style="left:295.70px;top:709.00px;font-size:12.5px;line-height:12.5px;font-weight:bold;color:#777;letter-spacing:-0.584px;">Středa</div>
<div class="a t " style="left:895.05px;top:690.00px;font-size:12.5px;line-height:12.5px;font-weight:bold;color:#111;letter-spacing:0.000px;">0</div>
<div class="a t " style="left:1408.55px;top:690.00px;font-size:12.5px;line-height:12.5px;font-weight:bold;color:#111;letter-spacing:0.000px;">0</div>
<div class="a ctl smena" style="left:400px;top:692px;width:75px"></div>
<div class="a rd" style="left:402px;top:694px"></div><div class="a rd" style="left:406px;top:694px"></div>
<div class="a t " style="left:405.00px;top:697.00px;font-size:12.5px;line-height:12.5px;font-weight:normal;color:#777;letter-spacing:-0.302px;">Směna</div>
<svg style="left:463px;top:700.4px" width="8" height="5" viewBox="0 0 8 5"><path d="M0.3 0.3H7.2L3.75 4Z" fill="#222"/></svg>
<div class="a ctl yel" style="left:481px;top:692px;width:79.5px"></div>
<div class="a t " style="left:486.50px;top:697.00px;font-size:12.5px;line-height:12.5px;font-weight:normal;color:#777;letter-spacing:0.073px;">Start</div>
<div class="a ctl yel" style="left:566px;top:692px;width:80px"></div>
<div class="a t " style="left:572.40px;top:697.00px;font-size:12.5px;line-height:12.5px;font-weight:normal;color:#777;letter-spacing:-0.313px;">Konec</div>
<div class="a ctl yel" style="left:652px;top:692px;width:143.5px"></div>
<div class="a rd" style="left:653.5px;top:694px"></div><div class="a rd" style="left:657.8px;top:694px"></div>
<div class="a t " style="left:657.30px;top:697.00px;font-size:12.5px;line-height:12.5px;font-weight:normal;color:#777;letter-spacing:-0.007px;">Pracoviště</div>
<svg style="left:784.3px;top:700.4px" width="8" height="5" viewBox="0 0 8 5"><path d="M0.3 0.3H7.2L3.75 4Z" fill="#222"/></svg>
<svg style="left:807px;top:694px" width="17" height="15" viewBox="0 0 17 15"><defs><linearGradient id="cg8" x1="0" y1="0" x2="0" y2="1"><stop offset="0" stop-color="#f39a5a"/><stop offset="1" stop-color="#e2683a"/></linearGradient></defs><path d="M2.3 7.7L6.6 11.8 14.3 1.8" fill="none" stroke="url(#cg8)" stroke-width="3.1" stroke-linecap="round" stroke-linejoin="round"/></svg>
<div class="a vl" style="left:394px;top:682px;height:45px"></div>
<div class="a vl" style="left:850px;top:682px;height:45px"></div>
<div class="a vl" style="left:907px;top:682px;height:45px"></div>
<div class="a vl" style="left:1363px;top:682px;height:45px"></div>
<div class="a vl" style="left:1420px;top:682px;height:45px"></div>
<div class="a hl" style="top:726px"></div>
<div class="a t " style="left:296.00px;top:734.00px;font-size:13px;line-height:13px;font-weight:bold;color:#222;letter-spacing:-0.230px;">9.12.2021</div>
<div class="a t " style="left:295.70px;top:754.00px;font-size:12.5px;line-height:12.5px;font-weight:bold;color:#777;letter-spacing:-0.538px;">Čtvrtek</div>
<div class="a t " style="left:895.05px;top:735.00px;font-size:12.5px;line-height:12.5px;font-weight:bold;color:#111;letter-spacing:0.000px;">0</div>
<div class="a t " style="left:1408.55px;top:735.00px;font-size:12.5px;line-height:12.5px;font-weight:bold;color:#111;letter-spacing:0.000px;">0</div>
<div class="a ctl smena" style="left:400px;top:737px;width:75px"></div>
<div class="a rd" style="left:402px;top:739px"></div><div class="a rd" style="left:406px;top:739px"></div>
<div class="a t " style="left:405.00px;top:742.00px;font-size:12.5px;line-height:12.5px;font-weight:normal;color:#777;letter-spacing:-0.302px;">Směna</div>
<svg style="left:463px;top:745.4px" width="8" height="5" viewBox="0 0 8 5"><path d="M0.3 0.3H7.2L3.75 4Z" fill="#222"/></svg>
<div class="a ctl yel" style="left:481px;top:737px;width:79.5px"></div>
<div class="a t " style="left:486.50px;top:742.00px;font-size:12.5px;line-height:12.5px;font-weight:normal;color:#777;letter-spacing:0.073px;">Start</div>
<div class="a ctl yel" style="left:566px;top:737px;width:80px"></div>
<div class="a t " style="left:572.40px;top:742.00px;font-size:12.5px;line-height:12.5px;font-weight:normal;color:#777;letter-spacing:-0.313px;">Konec</div>
<div class="a ctl yel" style="left:652px;top:737px;width:143.5px"></div>
<div class="a rd" style="left:653.5px;top:739px"></div><div class="a rd" style="left:657.8px;top:739px"></div>
<div class="a t " style="left:657.30px;top:742.00px;font-size:12.5px;line-height:12.5px;font-weight:normal;color:#777;letter-spacing:-0.007px;">Pracoviště</div>
<svg style="left:784.3px;top:745.4px" width="8" height="5" viewBox="0 0 8 5"><path d="M0.3 0.3H7.2L3.75 4Z" fill="#222"/></svg>
<svg style="left:807px;top:739px" width="17" height="15" viewBox="0 0 17 15"><defs><linearGradient id="cg9" x1="0" y1="0" x2="0" y2="1"><stop offset="0" stop-color="#f39a5a"/><stop offset="1" stop-color="#e2683a"/></linearGradient></defs><path d="M2.3 7.7L6.6 11.8 14.3 1.8" fill="none" stroke="url(#cg9)" stroke-width="3.1" stroke-linecap="round" stroke-linejoin="round"/></svg>
<div class="a vl" style="left:394px;top:727px;height:45px"></div>
<div class="a vl" style="left:850px;top:727px;height:45px"></div>
<div class="a vl" style="left:907px;top:727px;height:45px"></div>
<div class="a vl" style="left:1363px;top:727px;height:45px"></div>
<div class="a vl" style="left:1420px;top:727px;height:45px"></div>
<div class="a hl" style="top:771px"></div>
<div class="a t " style="left:296.00px;top:779.00px;font-size:13px;line-height:13px;font-weight:bold;color:#222;letter-spacing:-0.286px;">10.12.2021</div>
<div class="a t " style="left:295.70px;top:799.00px;font-size:12.5px;line-height:12.5px;font-weight:bold;color:#777;letter-spacing:-0.625px;">Pátek</div>
<div class="a t " style="left:895.05px;top:780.00px;font-size:12.5px;line-height:12.5px;font-weight:bold;color:#111;letter-spacing:0.000px;">0</div>
<div class="a t " style="left:1408.55px;top:780.00px;font-size:12.5px;line-height:12.5px;font-weight:bold;color:#111;letter-spacing:0.000px;">0</div>
<div class="a ctl smena" style="left:400px;top:782px;width:75px"></div>
<div class="a rd" style="left:402px;top:784px"></div><div class="a rd" style="left:406px;top:784px"></div>
<div class="a t " style="left:405.00px;top:787.00px;font-size:12.5px;line-height:12.5px;font-weight:normal;color:#777;letter-spacing:-0.302px;">Směna</div>
<svg style="left:463px;top:790.4px" width="8" height="5" viewBox="0 0 8 5"><path d="M0.3 0.3H7.2L3.75 4Z" fill="#222"/></svg>
<div class="a ctl yel" style="left:481px;top:782px;width:79.5px"></div>
<div class="a t " style="left:486.50px;top:787.00px;font-size:12.5px;line-height:12.5px;font-weight:normal;color:#777;letter-spacing:0.073px;">Start</div>
<div class="a ctl yel" style="left:566px;top:782px;width:80px"></div>
<div class="a t " style="left:572.40px;top:787.00px;font-size:12.5px;line-height:12.5px;font-weight:normal;color:#777;letter-spacing:-0.313px;">Konec</div>
<div class="a ctl yel" style="left:652px;top:782px;width:143.5px"></div>
<div class="a rd" style="left:653.5px;top:784px"></div><div class="a rd" style="left:657.8px;top:784px"></div>
<div class="a t " style="left:657.30px;top:787.00px;font-size:12.5px;line-height:12.5px;font-weight:normal;color:#777;letter-spacing:-0.007px;">Pracoviště</div>
<svg style="left:784.3px;top:790.4px" width="8" height="5" viewBox="0 0 8 5"><path d="M0.3 0.3H7.2L3.75 4Z" fill="#222"/></svg>
<svg style="left:807px;top:784px" width="17" height="15" viewBox="0 0 17 15"><defs><linearGradient id="cg10" x1="0" y1="0" x2="0" y2="1"><stop offset="0" stop-color="#f39a5a"/><stop offset="1" stop-color="#e2683a"/></linearGradient></defs><path d="M2.3 7.7L6.6 11.8 14.3 1.8" fill="none" stroke="url(#cg10)" stroke-width="3.1" stroke-linecap="round" stroke-linejoin="round"/></svg>
<div class="a vl" style="left:394px;top:772px;height:45px"></div>
<div class="a vl" style="left:850px;top:772px;height:45px"></div>
<div class="a vl" style="left:907px;top:772px;height:45px"></div>
<div class="a vl" style="left:1363px;top:772px;height:45px"></div>
<div class="a vl" style="left:1420px;top:772px;height:45px"></div>
<div class="a hl" style="top:816px"></div>
<div class="a t " style="left:296.00px;top:824.00px;font-size:13px;line-height:13px;font-weight:bold;color:#222;letter-spacing:-0.207px;">11.12.2021</div>
<div class="a t " style="left:295.70px;top:844.00px;font-size:12.5px;line-height:12.5px;font-weight:bold;color:#777;letter-spacing:-0.635px;">Sobota</div>
<div class="a t " style="left:895.05px;top:825.00px;font-size:12.5px;line-height:12.5px;font-weight:bold;color:#111;letter-spacing:0.000px;">0</div>
<div class="a t " style="left:1408.55px;top:825.00px;font-size:12.5px;line-height:12.5px;font-weight:bold;color:#111;letter-spacing:0.000px;">0</div>
<div class="a vl" style="left:394px;top:817px;height:45px"></div>
<div class="a vl" style="left:850px;top:817px;height:45px"></div>
<div class="a vl" style="left:907px;top:817px;height:45px"></div>
<div class="a vl" style="left:1363px;top:817px;height:45px"></div>
<div class="a vl" style="left:1420px;top:817px;height:45px"></div>
<div class="a hl" style="top:861px"></div>
<div class="a t " style="left:296.00px;top:869.00px;font-size:13px;line-height:13px;font-weight:bold;color:#222;letter-spacing:-0.286px;">12.12.2021</div>
<div class="a t " style="left:295.70px;top:889.00px;font-size:12.5px;line-height:12.5px;font-weight:bold;color:#777;letter-spacing:-0.615px;">Neděle</div>
<div class="a t " style="left:895.05px;top:870.00px;font-size:12.5px;line-height:12.5px;font-weight:bold;color:#111;letter-spacing:0.000px;">0</div>
<div class="a t " style="left:1408.55px;top:870.00px;font-size:12.5px;line-height:12.5px;font-weight:bold;color:#111;letter-spacing:0.000px;">0</div>
<div class="a vl" style="left:394px;top:862px;height:45px"></div>
<div class="a vl" style="left:850px;top:862px;height:45px"></div>
<div class="a vl" style="left:907px;top:862px;height:45px"></div>
<div class="a vl" style="left:1363px;top:862px;height:45px"></div>
<div class="a vl" style="left:1420px;top:862px;height:45px"></div>
<div class="a hl" style="top:906px"></div>
<div class="a t " style="left:296.00px;top:914.00px;font-size:13px;line-height:13px;font-weight:bold;color:#222;letter-spacing:-0.286px;">13.12.2021</div>
<div class="a t " style="left:295.70px;top:934.00px;font-size:12.5px;line-height:12.5px;font-weight:bold;color:#777;letter-spacing:-0.564px;">Pondělí</div>
<div class="a t " style="left:895.05px;top:915.00px;font-size:12.5px;line-height:12.5px;font-weight:bold;color:#111;letter-spacing:0.000px;">0</div>
<div class="a t " style="left:1408.55px;top:915.00px;font-size:12.5px;line-height:12.5px;font-weight:bold;color:#111;letter-spacing:0.000px;">0</div>
<div class="a ctl smena" style="left:400px;top:917px;width:75px"></div>
<div class="a rd" style="left:402px;top:919px"></div><div class="a rd" style="left:406px;top:919px"></div>
<div class="a t " style="left:405.00px;top:922.00px;font-size:12.5px;line-height:12.5px;font-weight:normal;color:#777;letter-spacing:-0.302px;">Směna</div>
<svg style="left:463px;top:925.4px" width="8" height="5" viewBox="0 0 8 5"><path d="M0.3 0.3H7.2L3.75 4Z" fill="#222"/></svg>
<div class="a ctl yel" style="left:481px;top:917px;width:79.5px"></div>
<div class="a t " style="left:486.50px;top:922.00px;font-size:12.5px;line-height:12.5px;font-weight:normal;color:#777;letter-spacing:0.073px;">Start</div>
<div class="a ctl yel" style="left:566px;top:917px;width:80px"></div>
<div class="a t " style="left:572.40px;top:922.00px;font-size:12.5px;line-height:12.5px;font-weight:normal;color:#777;letter-spacing:-0.313px;">Konec</div>
<div class="a ctl yel" style="left:652px;top:917px;width:143.5px"></div>
<div class="a rd" style="left:653.5px;top:919px"></div><div class="a rd" style="left:657.8px;top:919px"></div>
<div class="a t " style="left:657.30px;top:922.00px;font-size:12.5px;line-height:12.5px;font-weight:normal;color:#777;letter-spacing:-0.007px;">Pracoviště</div>
<svg style="left:784.3px;top:925.4px" width="8" height="5" viewBox="0 0 8 5"><path d="M0.3 0.3H7.2L3.75 4Z" fill="#222"/></svg>
<svg style="left:807px;top:919px" width="17" height="15" viewBox="0 0 17 15"><defs><linearGradient id="cg13" x1="0" y1="0" x2="0" y2="1"><stop offset="0" stop-color="#f39a5a"/><stop offset="1" stop-color="#e2683a"/></linearGradient></defs><path d="M2.3 7.7L6.6 11.8 14.3 1.8" fill="none" stroke="url(#cg13)" stroke-width="3.1" stroke-linecap="round" stroke-linejoin="round"/></svg>
<div class="a vl" style="left:394px;top:907px;height:45px"></div>
<div class="a vl" style="left:850px;top:907px;height:45px"></div>
<div class="a vl" style="left:907px;top:907px;height:45px"></div>
<div class="a vl" style="left:1363px;top:907px;height:45px"></div>
<div class="a vl" style="left:1420px;top:907px;height:45px"></div>
<div class="a hl" style="top:951px"></div>
<div class="a t " style="left:296.00px;top:959.00px;font-size:13px;line-height:13px;font-weight:bold;color:#222;letter-spacing:-0.286px;">14.12.2021</div>
<div class="a t " style="left:295.70px;top:979.00px;font-size:12.5px;line-height:12.5px;font-weight:bold;color:#777;letter-spacing:-0.599px;">Úterý</div>
<div class="a t " style="left:895.05px;top:960.00px;font-size:12.5px;line-height:12.5px;font-weight:bold;color:#111;letter-spacing:0.000px;">0</div>
<div class="a t " style="left:1408.55px;top:960.00px;font-size:12.5px;line-height:12.5px;font-weight:bold;color:#111;letter-spacing:0.000px;">0</div>
<div class="a ctl smena" style="left:400px;top:962px;width:75px"></div>
<div class="a rd" style="left:402px;top:964px"></div><div class="a rd" style="left:406px;top:964px"></div>
<div class="a t " style="left:405.00px;top:967.00px;font-size:12.5px;line-height:12.5px;font-weight:normal;color:#777;letter-spacing:-0.302px;">Směna</div>
<svg style="left:463px;top:970.4px" width="8" height="5" viewBox="0 0 8 5"><path d="M0.3 0.3H7.2L3.75 4Z" fill="#222"/></svg>
<div class="a ctl yel" style="left:481px;top:962px;width:79.5px"></div>
<div class="a t " style="left:486.50px;top:967.00px;font-size:12.5px;line-height:12.5px;font-weight:normal;color:#777;letter-spacing:0.073px;">Start</div>
<div class="a ctl yel" style="left:566px;top:962px;width:80px"></div>
<div class="a t " style="left:572.40px;top:967.00px;font-size:12.5px;line-height:12.5px;font-weight:normal;color:#777;letter-spacing:-0.313px;">Konec</div>
<div class="a ctl yel" style="left:652px;top:962px;width:143.5px"></div>
<div class="a rd" style="left:653.5px;top:964px"></div><div class="a rd" style="left:657.8px;top:964px"></div>
<div class="a t " style="left:657.30px;top:967.00px;font-size:12.5px;line-height:12.5px;font-weight:normal;color:#777;letter-spacing:-0.007px;">Pracoviště</div>
<svg style="left:784.3px;top:970.4px" width="8" height="5" viewBox="0 0 8 5"><path d="M0.3 0.3H7.2L3.75 4Z" fill="#222"/></svg>
<svg style="left:807px;top:964px" width="17" height="15" viewBox="0 0 17 15"><defs><linearGradient id="cg14" x1="0" y1="0" x2="0" y2="1"><stop offset="0" stop-color="#f39a5a"/><stop offset="1" stop-color="#e2683a"/></linearGradient></defs><path d="M2.3 7.7L6.6 11.8 14.3 1.8" fill="none" stroke="url(#cg14)" stroke-width="3.1" stroke-linecap="round" stroke-linejoin="round"/></svg>
<div class="a vl" style="left:394px;top:952px;height:45px"></div>
<div class="a vl" style="left:850px;top:952px;height:45px"></div>
<div class="a vl" style="left:907px;top:952px;height:45px"></div>
<div class="a vl" style="left:1363px;top:952px;height:45px"></div>
<div class="a vl" style="left:1420px;top:952px;height:45px"></div>
<div class="a hl" style="top:996px"></div>
<div class="a t " style="left:296.00px;top:1004.00px;font-size:13px;line-height:13px;font-weight:bold;color:#222;letter-spacing:-0.286px;">15.12.2021</div>
<div class="a t " style="left:295.70px;top:1024.00px;font-size:12.5px;line-height:12.5px;font-weight:bold;color:#777;letter-spacing:-0.584px;">Středa</div>
<div class="a t " style="left:895.05px;top:1005.00px;font-size:12.5px;line-height:12.5px;font-weight:bold;color:#111;letter-spacing:0.000px;">0</div>
<div class="a t " style="left:1408.55px;top:1005.00px;font-size:12.5px;line-height:12.5px;font-weight:bold;color:#111;letter-spacing:0.000px;">0</div>
<div class="a ctl smena" style="left:400px;top:1007px;width:75px"></div>
<div class="a rd" style="left:402px;top:1009px"></div><div class="a rd" style="left:406px;top:1009px"></div>
<div class="a t " style="left:405.00px;top:1012.00px;font-size:12.5px;line-height:12.5px;font-weight:normal;color:#777;letter-spacing:-0.302px;">Směna</div>
<svg style="left:463px;top:1015.4px" width="8" height="5" viewBox="0 0 8 5"><path d="M0.3 0.3H7.2L3.75 4Z" fill="#222"/></svg>
<div class="a ctl yel" style="left:481px;top:1007px;width:79.5px"></div>
<div class="a t " style="left:486.50px;top:1012.00px;font-size:12.5px;line-height:12.5px;font-weight:normal;color:#777;letter-spacing:0.073px;">Start</div>
<div class="a ctl yel" style="left:566px;top:1007px;width:80px"></div>
<div class="a t " style="left:572.40px;top:1012.00px;font-size:12.5px;line-height:12.5px;font-weight:normal;color:#777;letter-spacing:-0.313px;">Konec</div>
<div class="a ctl yel" style="left:652px;top:1007px;width:143.5px"></div>
<div class="a rd" style="left:653.5px;top:1009px"></div><div class="a rd" style="left:657.8px;top:1009px"></div>
<div class="a t " style="left:657.30px;top:1012.00px;font-size:12.5px;line-height:12.5px;font-weight:normal;color:#777;letter-spacing:-0.007px;">Pracoviště</div>
<svg style="left:784.3px;top:1015.4px" width="8" height="5" viewBox="0 0 8 5"><path d="M0.3 0.3H7.2L3.75 4Z" fill="#222"/></svg>
<svg style="left:807px;top:1009px" width="17" height="15" viewBox="0 0 17 15"><defs><linearGradient id="cg15" x1="0" y1="0" x2="0" y2="1"><stop offset="0" stop-color="#f39a5a"/><stop offset="1" stop-color="#e2683a"/></linearGradient></defs><path d="M2.3 7.7L6.6 11.8 14.3 1.8" fill="none" stroke="url(#cg15)" stroke-width="3.1" stroke-linecap="round" stroke-linejoin="round"/></svg>
<div class="a vl" style="left:394px;top:997px;height:45px"></div>
<div class="a vl" style="left:850px;top:997px;height:45px"></div>
<div class="a vl" style="left:907px;top:997px;height:45px"></div>
<div class="a vl" style="left:1363px;top:997px;height:45px"></div>
<div class="a vl" style="left:1420px;top:997px;height:45px"></div>
<div class="a hl" style="top:1041px"></div>
<div class="a t " style="left:296.00px;top:1049.00px;font-size:13px;line-height:13px;font-weight:bold;color:#222;letter-spacing:-0.286px;">16.12.2021</div>
<div class="a t " style="left:895.05px;top:1050.00px;font-size:12.5px;line-height:12.5px;font-weight:bold;color:#111;letter-spacing:0.000px;">0</div>
<div class="a t " style="left:1408.55px;top:1050.00px;font-size:12.5px;line-height:12.5px;font-weight:bold;color:#111;letter-spacing:0.000px;">0</div>
<div class="a ctl smena" style="left:400px;top:1052px;width:75px"></div>
<div class="a rd" style="left:402px;top:1054px"></div><div class="a rd" style="left:406px;top:1054px"></div>
<div class="a t " style="left:405.00px;top:1057.00px;font-size:12.5px;line-height:12.5px;font-weight:normal;color:#777;letter-spacing:-0.302px;">Směna</div>
<svg style="left:463px;top:1060.4px" width="8" height="5" viewBox="0 0 8 5"><path d="M0.3 0.3H7.2L3.75 4Z" fill="#222"/></svg>
<div class="a ctl yel" style="left:481px;top:1052px;width:79.5px"></div>
<div class="a t " style="left:486.50px;top:1057.00px;font-size:12.5px;line-height:12.5px;font-weight:normal;color:#777;letter-spacing:0.073px;">Start</div>
<div class="a ctl yel" style="left:566px;top:1052px;width:80px"></div>
<div class="a t " style="left:572.40px;top:1057.00px;font-size:12.5px;line-height:12.5px;font-weight:normal;color:#777;letter-spacing:-0.313px;">Konec</div>
<div class="a ctl yel" style="left:652px;top:1052px;width:143.5px"></div>
<div class="a rd" style="left:653.5px;top:1054px"></div><div class="a rd" style="left:657.8px;top:1054px"></div>
<div class="a t " style="left:657.30px;top:1057.00px;font-size:12.5px;line-height:12.5px;font-weight:normal;color:#777;letter-spacing:-0.007px;">Pracoviště</div>
<svg style="left:784.3px;top:1060.4px" width="8" height="5" viewBox="0 0 8 5"><path d="M0.3 0.3H7.2L3.75 4Z" fill="#222"/></svg>
<svg style="left:807px;top:1054px" width="17" height="15" viewBox="0 0 17 15"><defs><linearGradient id="cg16" x1="0" y1="0" x2="0" y2="1"><stop offset="0" stop-color="#f39a5a"/><stop offset="1" stop-color="#e2683a"/></linearGradient></defs><path d="M2.3 7.7L6.6 11.8 14.3 1.8" fill="none" stroke="url(#cg16)" stroke-width="3.1" stroke-linecap="round" stroke-linejoin="round"/></svg>
<div class="a vl" style="left:394px;top:1042px;height:25px"></div>
<div class="a vl" style="left:850px;top:1042px;height:25px"></div>
<div class="a vl" style="left:907px;top:1042px;height:25px"></div>
<div class="a vl" style="left:1363px;top:1042px;height:25px"></div>
<div class="a vl" style="left:1420px;top:1042px;height:25px"></div>
<div id="vsb" class="a"></div><div id="vthumb" class="a"></div><div id="hsb" class="a"></div><div id="corner" class="a"></div>
<svg style="left:1909px;top:190px" width="9" height="6" viewBox="0 0 9 6"><path d="M1 5H8L4.5 1Z" fill="#a3a3a3"/></svg>
<svg style="left:1909px;top:1058px" width="9" height="6" viewBox="0 0 9 6"><path d="M1 1H8L4.5 5Z" fill="#505050"/></svg>
<svg style="left:265px;top:1069px" width="6" height="9" viewBox="0 0 6 9"><path d="M5 1V8L1 4.5Z" fill="#a3a3a3"/></svg>
<svg style="left:1899px;top:1069px" width="6" height="9" viewBox="0 0 6 9"><path d="M1 1V8L5 4.5Z" fill="#a3a3a3"/></svg>
<svg style="left:0;top:0" width="1920" height="1080"><path d="M407 397.5L534 561" stroke="#000" stroke-width="2.2"/></svg>
<div id="callout" class="a"></div>
<div class="a t " style="left:593.30px;top:591.00px;font-size:32px;line-height:32px;font-weight:normal;color:#000;letter-spacing:0.184px;">Tlačítko pro</div>
<div class="a t " style="left:568.30px;top:634.00px;font-size:32px;line-height:32px;font-weight:normal;color:#000;letter-spacing:-0.340px;">smazání směny</div></body></html>
